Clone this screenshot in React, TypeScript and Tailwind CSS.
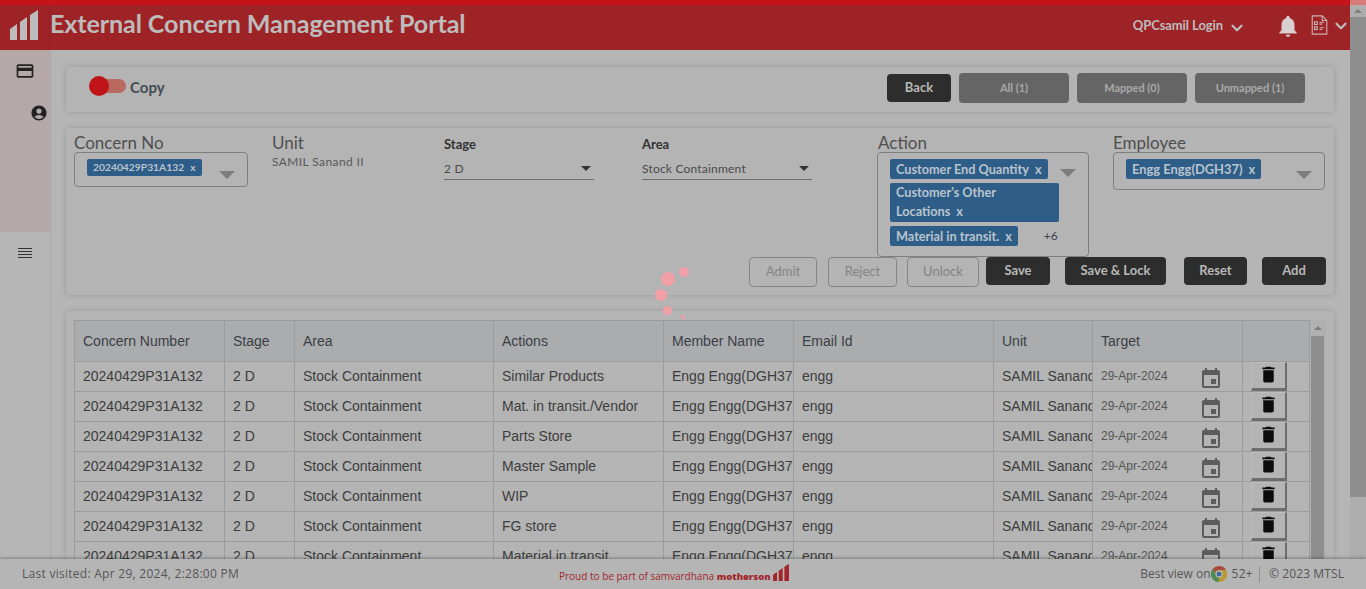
import React from 'react';
import { MdAccountCircle, MdCreditCard, MdDelete, MdEvent, MdNotifications } from 'react-icons/md';
import { ChevronDown } from 'lucide-react';

const rows = [
  'Similar Products',
  'Mat. in transit./Vendor',
  'Parts Store',
  'Master Sample',
  'WIP',
  'FG store',
  'Material in transit',
];

const headers = ['Concern Number', 'Stage', 'Area', 'Actions', 'Member Name', 'Email Id', 'Unit', 'Target', ''];

function BarsLogo({ className }: { className: string }) {
  return (
    <svg viewBox="0 0 28 30" className={className} fill="currentColor">
      <path d="M0 19l7-5v16H1a1 1 0 0 1-1-1z" />
      <path d="M10 12l7-5v23h-7z" />
      <path d="M20 5l8-5v30h-8z" />
    </svg>
  );
}

function Chip({ label, className }: { label: string; className?: string }) {
  return (
    <span className={`block w-fit rounded-[2px] bg-[#2e5d87] px-[6px] font-bold text-[#b9c4ce] ${className ?? ''}`}>
      {label}
      <span className="ml-[6px]">x</span>
    </span>
  );
}

function Caret({ className }: { className: string }) {
  return <span className={`absolute h-0 w-0 border-x-[8px] border-t-[8px] border-x-transparent border-t-[#7d7d7d] ${className}`} />;
}

function SelectLine({ value, width }: { value: string; width: string }) {
  return (
    <div className={`relative h-[20px] border-b border-[#6f6f6f] text-[12px] leading-[17px] tracking-[0.2px] text-[#4a4a4a] ${width}`}>
      {value}
      <span className="absolute right-[3px] top-[6px] h-0 w-0 border-x-[5px] border-t-[5px] border-x-transparent border-t-[#333]" />
    </div>
  );
}

function ChecklistIcon() {
  return (
    <svg viewBox="0 0 18 22" className="h-[20px] w-[17px]" fill="none" stroke="#c8b4b4" strokeWidth="1.2">
      <path d="M1 1h11l5 5v15H1z" />
      <path d="M12 1v5h5" />
      <rect x="3.5" y="7.5" width="3" height="3" />
      <rect x="3.5" y="13" width="3" height="3" />
      <path d="M9 8h5M9 10h3M9 14h5M9 16h3" />
    </svg>
  );
}

function ChromeIcon() {
  return (
    <svg viewBox="0 0 32 32" className="h-[16px] w-[16px] shrink-0">
      <circle cx="16" cy="16" r="16" fill="#b89a3a" />
      <path d="M16 0a16 16 0 0 1 14 8H16a8 8 0 0 0-7.500 5L3.500 6A16 16 0 0 1 16 0z" fill="#a84a42" />
      <path d="M30 8a16 16 0 0 1-13 24l7-12a8 8 0 0 0-1-12z" fill="#b89a3a" />
      <path d="M3.500 6l7 12a8 8 0 0 0 6.500 6l-3 8A16 16 0 0 1 3.500 6z" fill="#4d8a55" />
      <circle cx="16" cy="16" r="7" fill="#c4c4c4" />
      <circle cx="16" cy="16" r="5" fill="#41699a" />
    </svg>
  );
}

export default function App() {
  const cellClass = 'overflow-hidden whitespace-nowrap border border-[#9c9c9c] px-2 text-[14px] text-[#3d3d3d]';
  return (
    <div className="relative flex h-[589px] w-[1366px] flex-col overflow-hidden bg-[#b5b5b5] font-['Lato',sans-serif]">
      <div className="flex min-h-0 flex-1">
        <div className="flex w-[1350px] flex-col">
          <div className="h-[5px] shrink-0 bg-[#c81418]" />
          <header className="flex h-[45px] shrink-0 items-center bg-[#9e2327] text-[#bcbcbc]">
            <div className="flex h-full w-[50px] items-center justify-center border-r border-[#942024]">
              <BarsLogo className="mb-[5px] mr-[2px] h-[30px] w-[28px]" />
            </div>
            <h1 className="mb-[8px] text-[25.100px] font-bold leading-none tracking-[-0.1px]">External Concern Management Portal</h1>
            <div className="ml-auto flex items-center">
              <span className="mb-[4px] text-[13px] font-bold tracking-[-0.08px]">QPCsamil Login</span>
              <ChevronDown size={18} strokeWidth={3} className="ml-[5px]" />
              <MdNotifications size={26} className="mb-[4px] ml-[29px] text-[#d8d0d0]" />
              <span className="mb-[5px] ml-[10px]"><ChecklistIcon /></span>
              <ChevronDown size={18} strokeWidth={3} className="mb-[4px] ml-[4px]" />
            </div>
          </header>
          <div className="flex min-h-0 flex-1">
            <aside className="w-[51px] shrink-0 border-r border-[#a9a9a9] bg-[#b6b6b6]">
              <div className="h-[182px] bg-[#b5a8a8] pt-[11px]">
                <MdCreditCard size={20} className="ml-[15px] text-[#222]" />
                <MdAccountCircle size={18} className="ml-[30px] mt-[23px] text-[#222]" />
              </div>
              <div className="ml-[18px] mt-[16px] flex w-[14px] flex-col gap-[2px]">
                <span className="h-px bg-[#333]" />
                <span className="h-px bg-[#333]" />
                <span className="h-px bg-[#333]" />
                <span className="h-px bg-[#333]" />
              </div>
            </aside>
            <main className="min-w-0 flex-1 pl-[15px] pr-[16px] pt-[17px]">
              <section className="flex h-[45px] items-center rounded-[4px] bg-[#b4b4b4] pb-[3px] pl-[24px] pr-[29px] shadow-[0_0_6px_rgba(0,0,0,0.15)]">
                <div className="relative mb-[4px] h-[14px] w-[36px] rounded-full bg-[#b86a60]">
                  <span className="absolute -left-px -top-[3px] h-[20px] w-[20px] rounded-full bg-[#c01518]" />
                </div>
                <span className="mb-[2px] ml-[4px] text-[15px] font-bold text-[#444c55]">Copy</span>
                <button className="ml-auto h-[28px] w-[64px] rounded-[4px] bg-[#2d2d2d] text-[13px] font-bold text-[#b8b8b8]">Back</button>
                <button className="ml-[8px] h-[30px] w-[110px] rounded-[4px] bg-[#656565] text-[11px] font-bold text-[#a9a9a9]">All (1)</button>
                <button className="ml-[8px] h-[30px] w-[110px] rounded-[4px] bg-[#656565] text-[11px] font-bold text-[#a9a9a9]">Mapped (0)</button>
                <button className="ml-[8px] h-[30px] w-[110px] rounded-[4px] bg-[#656565] text-[11px] font-bold text-[#a9a9a9]">Unmapped (1)</button>
              </section>

              <section className="mt-[16px] h-[167px] rounded-[4px] bg-[#b4b4b4] pl-[8px] pt-[6px] shadow-[0_0_6px_rgba(0,0,0,0.15)]">
                <div className="grid h-[123px] grid-cols-[198px_172px_198px_235px_236px_212px]">
                  <div>
                    <div className="text-[17px] leading-[18px] text-[#4f4f4f]">Concern No</div>
                    <div className="relative h-[35px] w-[174px] rounded-[4px] border border-[#7f7f7f] pl-[12px] pt-[6px]">
                      <Chip label="20240429P31A132" className="h-[17px] text-[10.300px] leading-[17px]" />
                      <Caret className="right-[12px] top-[18px]" />
                    </div>
                  </div>
                  <div>
                    <div className="text-[17px] leading-[18px] text-[#4f4f4f]">Unit</div>
                    <div className="mt-[1px] text-[12px] tracking-[0.4px] text-[#585858]">SAMIL Sanand II</div>
                  </div>
                  <div>
                    <div className="pt-[2px] text-[13px] font-bold leading-[16px] text-[#333]">Stage</div>
                    <div className="mt-[8px]"><SelectLine value="2 D" width="w-[150px]" /></div>
                  </div>
                  <div>
                    <div className="pt-[2px] text-[13px] font-bold leading-[16px] text-[#333]">Area</div>
                    <div className="mt-[8px]"><SelectLine value="Stock Containment" width="w-[170px]" /></div>
                  </div>
                  <div>
                    <div className="pl-px text-[17px] leading-[18px] text-[#4f4f4f]">Action</div>
                    <div className="relative h-[105px] w-[212px] rounded-[4px] border border-[#7f7f7f] pl-[12px] pt-[6px] text-[12.700px]">
                      <Chip label="Customer End Quantity" className="h-[20px] leading-[20px]" />
                      <Caret className="right-[12px] top-[16px]" />
                      <div className="mt-[4px] h-[39px] w-[169px] rounded-[2px] bg-[#2e5d87] px-[6px] font-bold leading-[19px] text-[#b9c4ce]">
                        Customer's Other<br />Locations<span className="ml-[6px]">x</span>
                      </div>
                      <div className="mt-[4px] flex items-center">
                        <Chip label="Material in transit." className="h-[20px] leading-[20px]" />
                        <span className="ml-[26px] text-[12px] text-[#3f3f4f]">+6</span>
                      </div>
                    </div>
                  </div>
                  <div>
                    <div className="text-[17px] leading-[18px] text-[#4f4f4f]">Employee</div>
                    <div className="relative h-[38px] w-[212px] rounded-[4px] border border-[#7f7f7f] pl-[12px] pt-[6px] text-[12.900px]">
                      <Chip label="Engg Engg(DGH37)" className="h-[20px] leading-[20px]" />
                      <Caret className="right-[12px] top-[18px]" />
                    </div>
                  </div>
                </div>
                <div className="-mt-px flex h-[29px] items-center pl-[675px] text-[13px]">
                  <button className="mt-[2px] h-[30px] w-[68px] rounded-[4px] border border-[#858585] text-[#848484]">Admit</button>
                  <button className="ml-[11px] mt-[2px] h-[30px] w-[69px] rounded-[4px] border border-[#858585] text-[#848484]">Reject</button>
                  <button className="ml-[10px] mt-[2px] h-[30px] w-[72px] rounded-[4px] border border-[#858585] text-[#848484]">Unlock</button>
                  <button className="ml-[7px] h-[28px] w-[64px] rounded-[4px] bg-[#2d2d2d] pt-px font-bold text-[#b8b8b8]">Save</button>
                  <button className="ml-[15px] h-[28px] w-[101px] rounded-[4px] bg-[#2d2d2d] pt-px font-bold text-[#b8b8b8]">Save &amp; Lock</button>
                  <button className="ml-[18px] h-[28px] w-[63px] rounded-[4px] bg-[#2d2d2d] pt-px font-bold text-[#b8b8b8]">Reset</button>
                  <button className="ml-[15px] h-[28px] w-[64px] rounded-[4px] bg-[#2d2d2d] pt-px font-bold text-[#b8b8b8]">Add</button>
                </div>
              </section>

              <section className="mt-[16px] flex h-[300px] rounded-[4px] bg-[#b4b4b4] pl-[8px] pt-[9px] shadow-[0_0_6px_rgba(0,0,0,0.15)]">
                <table className="h-fit w-[1235px] table-fixed border-collapse font-['Liberation_Sans',Arial,sans-serif]">
                  <colgroup>
                    <col className="w-[150px]" />
                    <col className="w-[70px]" />
                    <col className="w-[199px]" />
                    <col className="w-[170px]" />
                    <col className="w-[130px]" />
                    <col className="w-[200px]" />
                    <col className="w-[99px]" />
                    <col className="w-[150px]" />
                    <col className="w-[67px]" />
                  </colgroup>
                  <thead>
                    <tr className="h-[41px] bg-[#abacae]">
                      {headers.map((h) => (
                        <th key={h || 'delete'} className="border border-[#9c9c9c] px-2 text-left text-[14px] font-normal text-[#3a3f46]">{h}</th>
                      ))}
                    </tr>
                  </thead>
                  <tbody>
                    {rows.map((action) => (
                      <tr key={action} className="h-[30px]">
                        <td className={cellClass}>20240429P31A132</td>
                        <td className={cellClass}>2 D</td>
                        <td className={cellClass}>Stock Containment</td>
                        <td className={cellClass}>{action}</td>
                        <td className={cellClass}>Engg Engg(DGH37)</td>
                        <td className={cellClass}>engg</td>
                        <td className={cellClass}>SAMIL Sanand II</td>
                        <td className="h-[30px] overflow-hidden border border-[#9c9c9c] px-2 py-0">
                          <div className="flex h-[28px] items-center justify-between pr-[11px] text-[12px] text-[#555]">
                            <span className="mb-px">29-Apr-2024</span>
                            <MdEvent size={24} className="mt-[4px] text-[#5c5c5c]" />
                          </div>
                        </td>
                        <td className="border border-[#9c9c9c] p-0">
                          <div className="ml-[8px] flex h-[29px] w-[36px] items-center justify-center border border-b-[3px] border-r-[2px] border-[#6e6e6e] border-l-[#bdbdbd] border-t-[#bdbdbd] bg-[#b4b4b4]">
                            <MdDelete size={21} className="mb-[3px] text-[#0c0c0c]" />
                          </div>
                        </td>
                      </tr>
                    ))}
                  </tbody>
                </table>
                <div className="w-[16px] shrink-0 bg-[#b0b0b0]">
                  <div className="flex h-[16px] items-center justify-center">
                    <span className="h-0 w-0 border-x-[4px] border-b-[4px] border-x-transparent border-b-[#7d7d7d]" />
                  </div>
                  <div className="ml-px h-[230px] w-[13px] bg-[#8e8e8e]" />
                </div>
              </section>
            </main>
          </div>
        </div>
        <div className="w-[16px] shrink-0 bg-[#adadad]">
          <div className="h-[5px] bg-[#d97a7a]" />
          <div className="flex h-[12px] items-center justify-center">
            <span className="h-0 w-0 border-x-[4px] border-b-[4px] border-x-transparent border-b-[#7d7d7d]" />
          </div>
          <div className="mx-auto h-[480px] w-[16px] bg-[#8e8e8e]" />
        </div>
      </div>

      <footer className="relative flex h-[30px] shrink-0 items-center bg-[#b5b5b5] pl-[22px] pr-[22px] font-['Open_Sans',sans-serif] text-[12px] tracking-[0.27px] text-[#555] shadow-[0_-1px_3px_rgba(0,0,0,0.3)]">
        <span className="w-[537px]">Last visited: Apr 29, 2024, 2:28:00 PM</span>
        <span className="mt-[5px] text-[10px] tracking-normal text-[#a1252b]">Proud to be part of samvardhana <b className="text-[9.500px] font-extrabold">motherson</b></span>
        <BarsLogo className="mb-[3px] ml-[2px] h-[17px] w-[16px] text-[#a1252b]" />
        <span className="ml-auto tracking-normal">Best view on</span>
        <ChromeIcon />
        <span className="ml-[5px]">52+</span>
        <span className="ml-[6px] mr-[9px] h-[16px] w-px bg-[#8f8f8f]" />
        <span className="tracking-[0.1px]">© 2023 MTSL</span>
      </footer>

      {/* loader dots sit over the page */}
      <span className="absolute left-[661px] top-[272px] h-[14px] w-[14px] rounded-full bg-[#f0a0a6]" />
      <span className="absolute left-[679px] top-[267px] h-[10px] w-[10px] rounded-full bg-[#f0a0a6]" />
      <span className="absolute left-[655px] top-[289px] h-[12px] w-[12px] rounded-full bg-[#f0a0a6]" />
      <span className="absolute left-[663px] top-[306px] h-[9px] w-[9px] rounded-full bg-[#f0a0a6]" />
      <span className="absolute left-[681px] top-[315px] h-[4px] w-[4px] rounded-full bg-[#f0a0a6]" />
    </div>
  );
}
